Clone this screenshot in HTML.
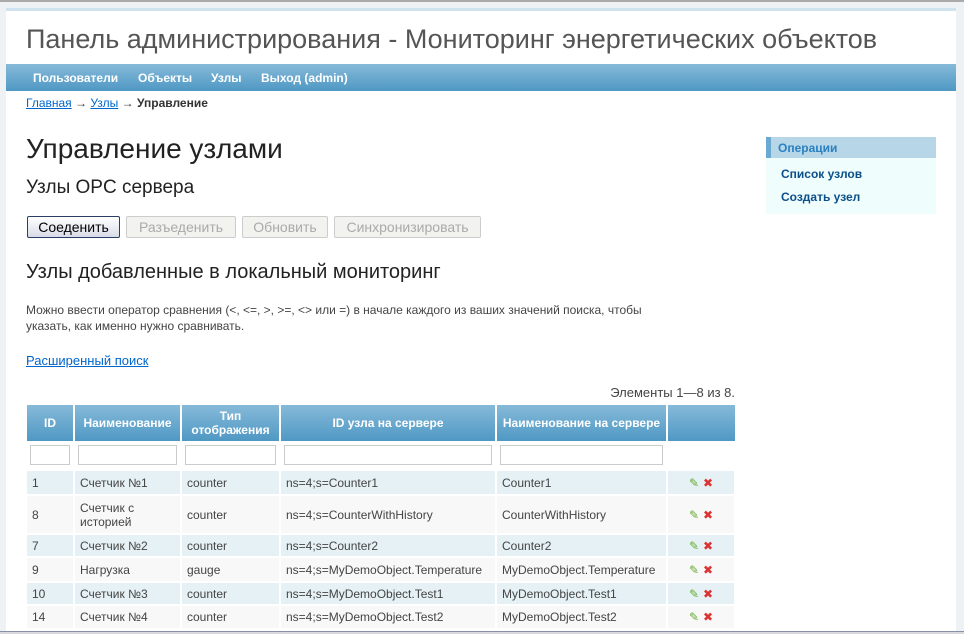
<!DOCTYPE html>
<html style="width:964px;height:634px;overflow:hidden"><head><meta charset="utf-8"><style>
*{margin:0;padding:0;box-sizing:border-box}
body{width:964px;height:634px;overflow:hidden;background:#eef2f5;font-family:"Liberation Sans",Arial,sans-serif;position:relative;border-top:2px solid #aaa}
#c{position:absolute;left:6px;top:6px;width:950px;height:626px;background:#fff;border-top:3px solid #cfe3ee;overflow:hidden}
.abs{position:absolute}
h1{position:absolute;left:20px;top:13px;font-weight:normal;font-size:27px;color:#555}
#nav{position:absolute;left:0;top:53px;width:950px;height:27px;background:linear-gradient(#86bad9,#4f98c4);}
#nav span{position:absolute;top:7px;color:#fff;font-weight:bold;font-size:12px}
#bc{position:absolute;left:20px;top:85px;font-size:12px;color:#333}
a{color:#06c;text-decoration:underline}
.btn{position:absolute;top:205px;height:22px;border:1px solid #ccc;border-radius:2px;background:#f2f2ee;color:#aaa;font-size:14px;text-align:center;line-height:20px}
table{position:absolute;left:21px;top:394px;border-collapse:collapse;font-size:12px;color:#444}
th{background:linear-gradient(#86bad9,#4f98c4);color:#fff;font-size:12px;font-weight:bold;border-right:2px solid #fff;height:36px;text-align:center;line-height:14px}
td{border-right:2px solid #fff;border-bottom:2px solid #fff;padding:0 5px}
tr.f td{background:#fff;height:29px;padding:0 3px}
tr.f input{width:100%;height:20px;border:1px solid #ccc;display:block}
tr.o td{background:#e5f1f4}
tr.e td{background:#f8f8f8}
.ic{display:inline-block;width:14px;height:14px;vertical-align:middle;font-size:12px;line-height:14px}
</style></head><body>
<div id="c">
<h1>Панель администрирования - Мониторинг энергетических объектов</h1>
<div id="nav"><span style="left:27px">Пользователи</span><span style="left:132px">Объекты</span><span style="left:205px">Узлы</span><span style="left:255px">Выход (admin)</span></div>
<div id="bc"><a>Главная</a> → <a>Узлы</a> → <b>Управление</b></div>
<div class="abs" style="left:20px;top:122px;font-size:28px;color:#222">Управление узлами</div>
<div class="abs" style="left:20px;top:166px;font-size:19px;color:#222">Узлы OPC сервера</div>
<div class="btn" style="left:21px;width:93px;border-color:#2a3f66;background:linear-gradient(#fff,#d8dce8);color:#000">Соеденить</div>
<div class="btn" style="left:120px;width:110px">Разъеденить</div>
<div class="btn" style="left:236px;width:86px">Обновить</div>
<div class="btn" style="left:328px;width:147px">Синхронизировать</div>
<div class="abs" style="left:20px;top:250px;font-size:20px;color:#222">Узлы добавленные в локальный мониторинг</div>
<div class="abs" style="left:20px;top:291px;font-size:12px;color:#444;line-height:16px;width:700px">Можно ввести оператор сравнения (&lt;, &lt;=, &gt;, &gt;=, &lt;&gt; или =) в начале каждого из ваших значений поиска, чтобы<br>указать, как именно нужно сравнивать.</div>
<div class="abs" style="left:20px;top:342px;font-size:13px"><a>Расширенный поиск</a></div>
<div class="abs" style="left:500px;top:374px;width:229px;text-align:right;font-size:13px;color:#444">Элементы 1—8 из 8.</div>
<table>
<tr><th style="width:47px">ID</th><th style="width:107px">Наименование</th><th style="width:99px">Тип<br>отображения</th><th style="width:216px">ID узла на сервере</th><th style="width:171px">Наименование на сервере</th><th style="width:68px;border-right:0"></th></tr>
<tr class="f"><td><input></td><td><input></td><td><input></td><td><input></td><td><input></td><td></td></tr>
<tr class="o" style="height:25px"><td>1</td><td>Счетчик №1</td><td>counter</td><td>ns=4;s=Counter1</td><td>Counter1</td><td style="text-align:center"><span class="ic" style="color:#6a3">✎</span><span class="ic" style="color:#d33">✖</span></td></tr>
<tr class="e" style="height:39px"><td>8</td><td>Счетчик с<br>историей</td><td>counter</td><td>ns=4;s=CounterWithHistory</td><td>CounterWithHistory</td><td style="text-align:center"><span class="ic" style="color:#6a3">✎</span><span class="ic" style="color:#d33">✖</span></td></tr>
<tr class="o" style="height:23px"><td>7</td><td>Счетчик №2</td><td>counter</td><td>ns=4;s=Counter2</td><td>Counter2</td><td style="text-align:center"><span class="ic" style="color:#6a3">✎</span><span class="ic" style="color:#d33">✖</span></td></tr>
<tr class="e" style="height:25px"><td>9</td><td>Нагрузка</td><td>gauge</td><td>ns=4;s=MyDemoObject.Temperature</td><td>MyDemoObject.Temperature</td><td style="text-align:center"><span class="ic" style="color:#6a3">✎</span><span class="ic" style="color:#d33">✖</span></td></tr>
<tr class="o" style="height:23px"><td>10</td><td>Счетчик №3</td><td>counter</td><td>ns=4;s=MyDemoObject.Test1</td><td>MyDemoObject.Test1</td><td style="text-align:center"><span class="ic" style="color:#6a3">✎</span><span class="ic" style="color:#d33">✖</span></td></tr>
<tr class="e" style="height:24px"><td>14</td><td>Счетчик №4</td><td>counter</td><td>ns=4;s=MyDemoObject.Test2</td><td>MyDemoObject.Test2</td><td style="text-align:center"><span class="ic" style="color:#6a3">✎</span><span class="ic" style="color:#d33">✖</span></td></tr>
</table>
<div class="abs" style="left:760px;top:126px;width:170px;height:77px;background:#effdfd"></div>
<div class="abs" style="left:760px;top:126px;width:170px;height:21px;background:#b7d6e8;border-left:5px solid #6aaad2;color:#2a80c0;font-weight:bold;font-size:12px;padding:4px 0 0 7px">Операции</div>
<div class="abs" style="left:775px;top:156px;color:#0b4f8a;font-weight:bold;font-size:12px">Список узлов</div>
<div class="abs" style="left:775px;top:179px;color:#0b4f8a;font-weight:bold;font-size:12px">Создать узел</div>
</div>
<div class="abs" style="left:0;top:629px;width:964px;height:5px;background:#d8d8e0;border-top:1px solid #8890a8"></div>
</body></html>
